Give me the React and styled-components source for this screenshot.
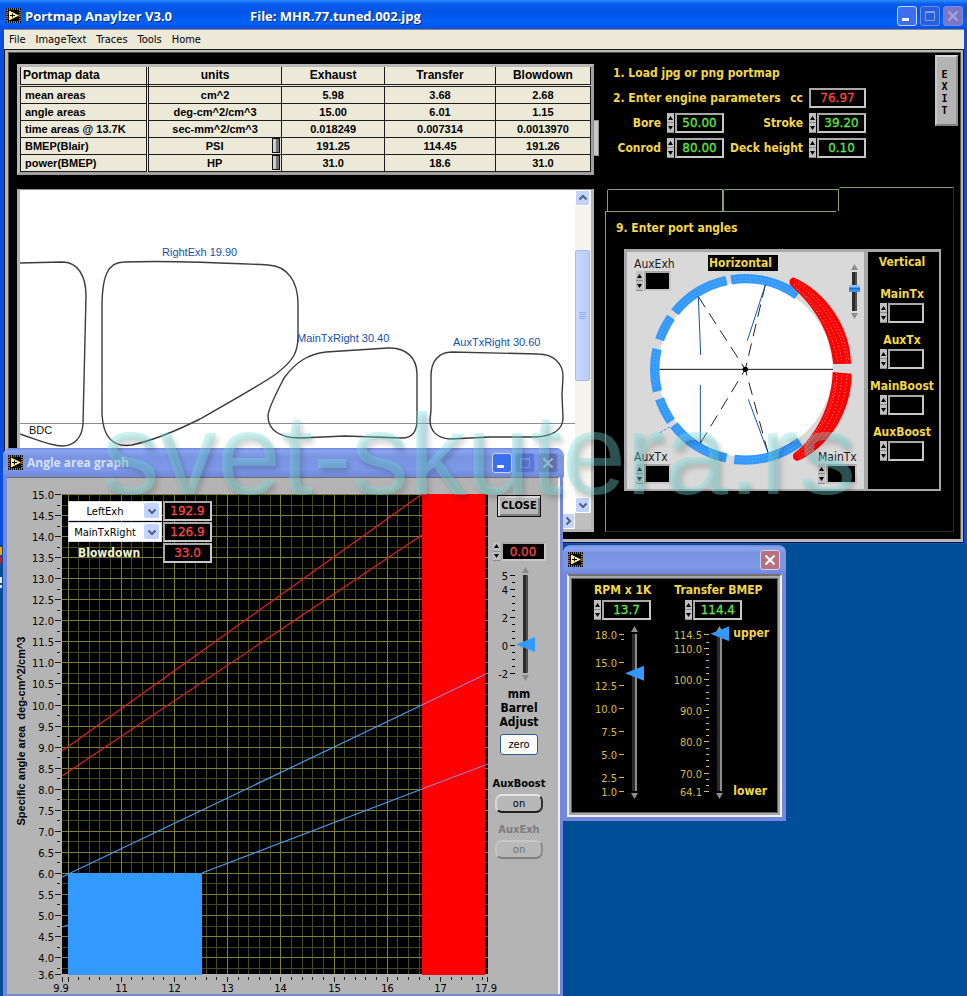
import React, { useState } from 'react';
import styled, { createGlobalStyle, css } from 'styled-components';

const tahoma = `"DejaVu Sans Condensed", "DejaVu Sans", sans-serif`;
const arial = `"Liberation Sans", Arial, sans-serif`;

const GlobalStyle = createGlobalStyle`
  * {
    box-sizing: border-box;
  }
  body {
    margin: 0;
    background: #004e98;
    font-family: ${tahoma};
    font-size: 11px;
    color: #000000;
  }
  button, input, select {
    font: inherit;
    margin: 0;
    padding: 0;
  }
`;

const Desktop = styled.div`
  position: relative;
  min-height: 100vh;
  overflow: hidden;
`;

const DesktopIcon = styled.div`
  position: absolute;
  left: 0;
  top: 547px;
  display: flex;
  flex-direction: column;
  gap: 2px;
  width: 2px;
`;

const IconSliver = styled.span`
  height: ${({ $size }) => $size}px;
  background: ${({ $color }) => $color};
`;

/* windows */

const WindowFrame = styled.section`
  position: absolute;
  border-radius: 8px 8px 0 0;
  background: ${({ $active }) => ($active ? '#0a4ee0' : '#7388dc')};
`;

const MainWindow = styled(WindowFrame)`
  top: 0;
  left: 0;
  right: 0;
  border-radius: 0;
  padding: 0 3px 1px 4px;
`;

const GraphWindow = styled(WindowFrame)`
  top: 448px;
  left: 3px;
  width: 560px;
  padding: 0 3px 2px 4px;
`;

const BmepWindow = styled(WindowFrame)`
  top: 545px;
  left: 563px;
  width: 223px;
  padding: 0 4px 4px;
`;

const TitleBar = styled.header`
  display: flex;
  align-items: center;
  height: ${({ $active }) => ($active ? 29 : 29)}px;
  margin: ${({ $active }) => ($active ? '0 -3px 0 -4px' : '0 -4px')};
  padding: ${({ $active }) => ($active ? '2px 4px 0 6px' : '0 6px 0 5px')};
  border-radius: ${({ $active }) => ($active ? '0' : '8px 8px 0 0')};
  background: ${({ $active }) =>
    $active
      ? 'linear-gradient(#2a8cff 0, #0a5cf0 4px, #0054e3 12px, #0062fa 22px, #0052e8 28px)'
      : 'linear-gradient(#6f86dc 0, #8ba6ee 3px, #7a94e2 8px, #7c98e6 22px, #7286dc 29px)'};
`;

const Title = styled.h1`
  margin: 0 0 0 4px;
  font: bold ${({ $dim }) => ($dim ? 12 : 13)}px/16px "Open Sans", "Noto Sans", sans-serif;
  color: ${({ $dim }) => ($dim ? '#d6e0f8' : '#ffffff')};
  text-shadow: ${({ $dim }) => ($dim ? 'none' : '1px 1px 0 #0a2c80')};
`;

const FileTitle = styled(Title).attrs({ as: 'span' })`
  margin-left: 78px;
`;

const TitleButtons = styled.div`
  display: flex;
  gap: 3px;
  margin-left: auto;
`;

const titleButtonColors = {
  active: ['#3c6ff0', '#ffffff'],
  disabled: ['#2a5fdc', '#7ea0f0'],
  disabledClose: ['#7a78c4', '#a9a4dc'],
  faded: ['#5a78d8', '#7c96e4'],
  fadedClose: ['#6a74bc', '#b9c4e8'],
  close: ['#b8707c', '#ffffff'],
};

const TitleButton = styled.button`
  display: grid;
  place-items: center;
  width: 20px;
  height: 20px;
  border: 1px solid
    ${({ $look }) =>
      $look === 'active' || $look === 'close' ? '#c8d6fa' : '#6f8ce8'};
  border-radius: 3px;
  background: ${({ $look }) => titleButtonColors[$look][0]};
  color: ${({ $look }) => titleButtonColors[$look][1]};
`;

const MenuBar = styled.nav`
  display: flex;
  gap: 10px;
  height: 20px;
  padding: 0 5px;
  border-top: 1px solid #8a8a80;
  background: #ece9d8;
`;

const MenuLink = styled.a`
  font-size: 11px;
  line-height: 20px;
  color: #000000;
  text-decoration: none;
`;

const MainBody = styled.main`
  display: flex;
  gap: 11px;
  padding: 2px 3px 7px 9px;
  border: solid #b8b8b4;
  border-width: 3px 3px 4px 4px;
  background: #000000;
  box-shadow: inset 1px 1px 0 #505050, inset -1px 0 0 #505050;
  outline: 1px solid #181818;
  outline-offset: -1px;
`;

const LeftColumn = styled.div`
  flex: 1;
  min-width: 0;
  display: flex;
  flex-direction: column;
  gap: 14px;
  padding-top: 10px;
`;

const RightColumn = styled.div`
  flex: none;
  width: 353px;
  padding-top: 1px;
`;

/* data table */

const TableFrame = styled.div`
  position: relative;
  border: 3px solid #a8a8a8;
  border-color: #b8b8b8 #a0a0a0 #a0a0a0 #b8b8b8;
`;

const DataTable = styled.table`
  width: 100%;
  table-layout: fixed;
  border-collapse: collapse;
  background: #ece9d8;
  font: bold 11px/14px ${arial};
  text-align: center;
`;

const cell = css`
  height: 17px;
  padding: 1px 4px;
  border: 1px solid #1c1c1c;
  overflow: hidden;
  white-space: nowrap;
`;

const HeadCell = styled.th`
  ${cell}
  height: 18px;
  border-top: 0;
  border-bottom: 3px double #1c1c1c;
  font-size: 12px;
  text-align: ${({ $left }) => ($left ? 'left' : 'center')};
  ${({ $left }) => $left && 'padding-left: 2px; border-right: 3px double #1c1c1c;'}
`;

const RowHead = styled.th`
  ${cell}
  border-right: 3px double #1c1c1c;
  text-align: left;
`;

const Cell = styled.td`
  ${cell}
`;

const UnitCell = styled.div`
  display: flex;
  align-items: center;
  justify-content: flex-end;
  height: 14px;
  margin-right: -3px;
`;

const UnitText = styled.span`
  flex: 1;
  padding-left: 4px;
`;

const UnitButton = styled.button`
  width: 8px;
  height: 15px;
  border: 1px solid #101010;
  background: linear-gradient(90deg, #d0d0d0 40%, #707070 60%);
`;

const TableScroll = styled.div`
  position: absolute;
  top: 53px;
  right: -8px;
  width: 6px;
  height: 36px;
  border: 1px solid #909090;
  background: #c8c8c8;
`;

/* portmap picture */

const MapFrame = styled.div`
  display: grid;
  grid-template-columns: 1fr 16px;
  grid-template-rows: 323px 16px;
  border: 2px solid #b4b4b4;
  border-width: 1px 3px 3px;
  border-top-color: #8c8c8c;
  background: #c0c0c0;
`;

const MapView = styled.div`
  min-width: 0;
  overflow: hidden;
  background: #ffffff;
`;

const Port = styled.path`
  fill: none;
  stroke: #3c3c3c;
  stroke-width: 1.4;
`;

const MapLabel = styled.text`
  font: 11px ${arial};
  fill: ${({ $dark }) => ($dark ? '#101010' : '#1450a8')};
`;

const ScrollBar = styled.div`
  display: flex;
  flex-direction: ${({ $vertical }) => ($vertical ? 'column' : 'row')};
  justify-content: ${({ $vertical }) => ($vertical ? 'flex-start' : 'flex-end')};
  background: #f4f3ee;
`;

const ScrollButton = styled.button`
  display: grid;
  place-items: center;
  flex: none;
  width: 15px;
  height: 16px;
  border: 1px solid #ffffff;
  border-radius: 2px;
  background: #c2d3fc;
  color: #4d6185;
`;

const ScrollThumb = styled.div`
  display: flex;
  flex-direction: column;
  align-items: center;
  justify-content: center;
  gap: 1px;
  width: 15px;
  height: 131px;
  margin: 44px 0 auto;
  border: 1px solid #a4bcf0;
  border-radius: 2px;
  background: linear-gradient(90deg, #cad8fe, #b8ccfb);
`;

const Grip = styled.i`
  width: 7px;
  height: 1px;
  background: #8cb0f8;
`;

/* numeric controls */

const Spin = styled.span`
  display: inline-flex;
  gap: 1px;
`;

const SpinButtons = styled.span`
  display: flex;
  flex-direction: column;
  width: 7px;
`;

const SpinButton = styled.button`
  display: grid;
  place-items: center;
  flex: 1;
  width: 7px;
  border: 1px solid #8c8c8c;
  border-width: 0 0 1px;
  background: #c0c0c0;
`;

const NumberBox = styled.input`
  width: ${({ $width }) => $width || 49}px;
  height: ${({ $height }) => $height || 20}px;
  border: 2px solid #b4b4b4;
  border-color: #a8a8a8 #c8c8c8 #c8c8c8 #a8a8a8;
  border-radius: 0;
  background: #000000;
  color: ${({ $red }) => ($red ? '#f04848' : '#62e44c')};
  font: 12px/16px "DejaVu Sans", sans-serif;
  -webkit-text-stroke: 0.3px currentColor;
  text-align: center;
  outline: none;
`;

/* engine parameters */

const ParamArea = styled.div`
  display: flex;
  justify-content: space-between;
  align-items: flex-start;
  height: 132px;
`;

const ParamGrid = styled.div`
  display: grid;
  grid-template-columns: 56px 57px 73px 57px;
  grid-auto-rows: 20px;
  gap: 5px 6px;
  align-items: center;
  justify-items: end;
  padding-top: 8px;
`;

const Label = styled.label`
  font-weight: bold;
  font-size: 12px;
  line-height: 14px;
  color: ${({ $color }) => $color || '#f2d64c'};
  white-space: nowrap;
`;

const Heading = styled.h2`
  grid-column: 1 / -1;
  justify-self: start;
  margin: 0 0 0 8px;
  font-weight: bold;
  font-size: 12px;
  line-height: 14px;
  color: #f2d64c;
`;

const StepTwo = styled.div`
  grid-column: 1 / 4;
  justify-self: stretch;
  display: flex;
  justify-content: space-between;
`;

const ExitButton = styled.button`
  width: 23px;
  height: 71px;
  padding: 5px 4px 0 0;
  border: 2px solid #b8b8b8;
  border-color: #d8d8d8 #909090 #808080 #c8c8c8;
  background: #b4b4b4;
  font: bold 10px/12px "DejaVu Sans Mono", monospace;
  white-space: pre-line;
`;

/* tab control */

const Tabs = styled.div`
  display: flex;
  align-items: flex-end;
  width: 349px;
  height: 24px;
  padding-left: 2px;
`;

const Tab = styled.button`
  flex: 1;
  height: ${({ $open }) => ($open ? 24 : 22)}px;
  border: 1px solid #86a274;
  border-right-color: ${({ $open }) => ($open ? '#1c3c10' : '#86a274')};
  border-bottom: 0;
  border-left-width: ${({ $open }) => ($open ? 0 : 1)}px;
  border-radius: 2px 0 0 0;
  background: #000000;
`;

const TabPanel = styled.div`
  width: 349px;
  height: 320px;
  padding: 9px 12px 0 18px;
  border: 1px solid #86a274;
  border-color: #86a274 #1c3c10 #1c3c10 #86a274;
  border-top: 0;
`;

const TabRule = styled.div`
  width: 231px;
  height: 1px;
  background: #86a274;
`;

const PanelHeading = styled(Heading)`
  margin: 0 0 14px -8px;
`;

const AngleCluster = styled.div`
  display: grid;
  grid-template-columns: 1fr 71px;
  gap: 4px;
  border: 3px solid #a8a8a8;
  border-width: 3px 3px 2px;
  background: #a8a8a8;
`;

const DialPane = styled.div`
  position: relative;
  height: 237px;
  background: #d9d9d9;
`;

const DialTitle = styled.span`
  position: absolute;
  top: 3px;
  left: 81px;
  padding: 1px 6px 1px 1px;
  background: #000000;
  color: #f2d64c;
  font: bold 12px/14px ${tahoma};
`;

const DialField = styled.label`
  position: absolute;
  display: flex;
  flex-direction: column;
  top: ${({ $bottom }) => ($bottom ? 'auto' : '5px')};
  bottom: ${({ $bottom }) => ($bottom ? '5px' : 'auto')};
  left: ${({ $right }) => ($right ? 'auto' : '7px')};
  right: ${({ $right }) => ($right ? '7px' : 'auto')};
  font: 12px/14px ${tahoma};
  color: #202020;
`;

const DialSpin = styled(Spin)`
  padding-left: ${({ $indent }) => $indent || 0}px;
`;

const DialSlider = styled.div`
  position: absolute;
  top: 12px;
  right: 4px;
`;

const VerticalPane = styled.div`
  display: flex;
  flex-direction: column;
  align-items: center;
  padding: 3px 3px 3px 0;
  background: #000000;
`;

const VerticalTitle = styled(Label).attrs({ as: 'h3' })`
  margin: 0 0 8px;
`;

const VerticalField = styled.label`
  display: flex;
  flex-direction: column;
  align-items: center;
  gap: 2px;
  padding-top: 10px;
  font: bold 12px/14px ${tahoma};
  color: #f2d64c;
`;

/* sliders */

const SliderRow = styled.div`
  display: flex;
  align-items: center;
`;

const SliderColumn = styled.div`
  display: flex;
  flex-direction: column;
  align-items: center;
  gap: 1px;
`;

const Track = styled.div`
  width: ${({ $bar }) => ($bar ? 11 : 19)}px;
  height: ${({ $height }) => $height}px;
  background: linear-gradient(90deg, #2c2c2c 60%, ${({ $edge }) => $edge || '#505050'} 61%)
    center / 5px 100% no-repeat;
`;

const Range = styled.input`
  appearance: none;
  display: block;
  writing-mode: vertical-lr;
  direction: rtl;
  width: 100%;
  height: ${({ $bar }) => ($bar ? '100%' : 'calc(100% + 15px)')};
  margin-top: ${({ $bar }) => ($bar ? 0 : -8)}px;
  background: transparent;
  &::-webkit-slider-thumb {
    appearance: none;
    width: ${({ $bar }) => ($bar ? 11 : 19)}px;
    height: ${({ $bar }) => ($bar ? 7 : 15)}px;
    border: 0;
    background: ${({ $bar }) =>
      $bar ? 'linear-gradient(#8cc4ff 0 2px, #2070c8 3px 4px, #3399ff 5px)' : '#3399ff'};
    clip-path: ${({ $bar }) => ($bar ? 'none' : 'polygon(0 50%, 100% 0, 100% 100%)')};
  }
`;

const ScaleText = styled.text`
  font: 11px ${tahoma};
  fill: ${({ $color }) => $color};
  text-anchor: end;
`;

/* graph window */

const GraphBody = styled.div`
  display: flex;
  border-top: 1px solid #707070;
  border-right: 2px solid #f0f0f0;
  background: #b4b4b4;
`;

const ChartArea = styled.div`
  position: relative;
  flex: none;
  width: 483px;
`;

const ChartSvg = styled.svg`
  display: block;
  overflow: visible;
`;

const AxisText = styled.text`
  font: 11px ${tahoma};
  text-anchor: ${({ $anchor }) => $anchor || 'end'};
`;

const AxisTitle = styled.text`
  font: bold 11px ${arial};
  text-anchor: middle;
  white-space: pre;
`;

const ChartControls = styled.div`
  position: absolute;
  top: 23px;
  left: 61px;
  display: grid;
  grid-template-columns: 94px 49px;
  gap: 1px;
`;

const SelectWrap = styled.div`
  position: relative;
  height: 20px;
`;

const Select = styled.select`
  appearance: none;
  width: 100%;
  height: 20px;
  padding: 0 20px 0 0;
  border: 1px solid #d8dce8;
  border-radius: 0;
  background: #ffffff;
  text-align: center;
  text-align-last: center;
`;

const SelectArrow = styled.span`
  position: absolute;
  top: 2px;
  right: 3px;
  display: grid;
  place-items: center;
  width: 15px;
  height: 15px;
  border-radius: 2px;
  background: #c2d3fc;
  color: #4d6185;
  pointer-events: none;
`;

const BlowdownLabel = styled(Label)`
  padding-left: 10px;
  line-height: 20px;
`;

const GraphSide = styled.div`
  display: flex;
  flex-direction: column;
  align-items: center;
  width: 58px;
  padding-top: 17px;
`;

const CloseButton = styled.button`
  width: 44px;
  height: 22px;
  margin-bottom: 25px;
  border: 1px solid #101010;
  background: #b8b8b8;
  box-shadow: inset 1px 1px 0 1px #d8d8d8, inset -1px -1px 0 1px #808080;
  font: bold 11px/18px ${tahoma};
`;

const BarrelSlider = styled(SliderRow)`
  align-self: flex-start;
  margin-top: 4px;
`;

const BarrelText = styled.p`
  margin: 4px 0 5px;
  font-weight: bold;
  font-size: 12px;
  line-height: 14px;
  text-align: center;
`;

const ZeroButton = styled.button`
  width: 38px;
  height: 21px;
  margin-bottom: 22px;
  border: 1px solid #2c5c8c;
  border-radius: 3px;
  background: #fafaf6;
`;

const SideLabel = styled(Label)`
  font-size: 11px;
`;

const OnButton = styled.button`
  width: 48px;
  height: 19px;
  margin: 3px 0 10px;
  border: 2px solid;
  border-color: ${({ disabled }) =>
    disabled ? '#c8c8c8 #8c8c8c #808080 #c4c4c4' : '#e4e4e4 #303030 #202020 #d8d8d8'};
  border-radius: 7px;
  background: #b8b8b8;
  color: ${({ disabled }) => (disabled ? '#707070' : '#000000')};
  line-height: 14px;
`;

/* bmep window */

const BmepBody = styled.div`
  display: flex;
  gap: 23px;
  height: 243px;
  padding: 7px 0 0 25px;
  border: 2px solid #f0f0ec;
  border-top-color: #707070;
  background: #000000;
  box-shadow: inset 0 0 0 2px #a8a8a8, inset 0 0 0 3px #606060;
`;

const BmepColumn = styled.div`
  display: flex;
  flex-direction: column;
  align-items: flex-start;
`;

const BmepSpin = styled(Spin)`
  margin: 3px 0 4px ${({ $indent }) => $indent || 0}px;
`;

const Bounds = styled.div`
  display: flex;
  flex-direction: column;
  justify-content: space-between;
  align-self: stretch;
  padding: 2px 0 3px 4px;
`;

const Watermark = styled.div`
  position: absolute;
  top: 389px;
  left: 102px;
  font: 115px/130px ${arial};
  color: rgba(120, 225, 225, 0.36);
  text-shadow: 3px 4px 5px rgba(0, 0, 0, 0.16);
  white-space: nowrap;
  pointer-events: none;
`;

const AppIcon = () => (
  <svg width="15" height="15" viewBox="0 0 15 15">
    <rect width="15" height="15" fill="#101010" />
    <rect x="1" y="1" width="13" height="13" fill="none" stroke="#e8e0a0" strokeDasharray="1 1" />
    <rect x="2" y="2" width="11" height="11" fill="#000000" />
    <path d="M0 5h3M0 10h3M12 8h3" stroke="#d03020" />
    <path d="M3 2.500l10 5-10 5z" fill="#fff68c" />
    <path d="M4 7.500h5M6.500 5.500v4" stroke="#000000" />
  </svg>
);

const MinimizeGlyph = () => (
  <svg width="16" height="16">
    <path d="M3 11.500h7" stroke="currentColor" strokeWidth="3" />
  </svg>
);

const MaximizeGlyph = () => (
  <svg width="16" height="16">
    <path d="M3.500 3.500h9v9h-9zM3.500 4.500h9" fill="none" stroke="currentColor" />
  </svg>
);

const CloseGlyph = () => (
  <svg width="16" height="16">
    <path d="M3.500 3.500l9 9M12.500 3.500l-9 9" stroke="currentColor" strokeWidth="2" />
  </svg>
);

const Chevron = ({ turn = 0 }) => (
  <svg width="10" height="10" viewBox="0 0 10 10">
    <path
      d="M1.500 3.500L5 7l3.500-3.500"
      fill="none"
      stroke="currentColor"
      strokeWidth="2"
      transform={`rotate(${turn} 5 5)`}
    />
  </svg>
);

const SpinArrow = ({ down }) => (
  <svg width="5" height="4">
    <path d={down ? 'M0 0h5L2.500 4z' : 'M0 4h5L2.500 0z'} />
  </svg>
);

const EndArrow = ({ down }) => (
  <svg width="7" height="7">
    <path d={down ? 'M0 1h7L3.500 7z' : 'M0 6h7L3.500 0z'} fill="#8c8c8c" />
  </svg>
);

const NumberSpin = ({ as: Wrap = Spin, indent, label, ...box }) => (
  <Wrap $indent={indent}>
    <SpinButtons>
      <SpinButton aria-label="Increase">
        <SpinArrow />
      </SpinButton>
      <SpinButton aria-label="Decrease">
        <SpinArrow down />
      </SpinButton>
    </SpinButtons>
    <NumberBox aria-label={label} {...box} />
  </Wrap>
);

const Slider = ({ bar, height, edge, label, ...range }) => (
  <SliderColumn>
    <EndArrow />
    <Track $bar={bar} $height={height} $edge={edge}>
      <Range type="range" step="any" aria-label={label} $bar={bar} {...range} />
    </Track>
    <EndArrow down />
  </SliderColumn>
);

const Scale = ({ width, height, min, max, labels, minors = [], digits = 0, color = '#000000' }) => {
  const at = (v) => Math.round(10 + ((max - v) / (max - min)) * height) + 0.5;
  return (
    <svg width={width} height={height + 20}>
      {labels.map((v) => (
        <g key={v}>
          <ScaleText $color={color} x={width - 8} y={at(v) + 4}>
            {v.toFixed(digits)}
          </ScaleText>
          <path d={`M${width - 6} ${at(v)}h5`} stroke={color} />
        </g>
      ))}
      {minors.map((v) => (
        <path key={v} d={`M${width - 4} ${at(v)}h3`} stroke={color} />
      ))}
    </svg>
  );
};

const rows = [
  ['mean areas', 'cm^2', '5.98', '3.68', '2.68'],
  ['angle areas', 'deg-cm^2/cm^3', '15.00', '6.01', '1.15'],
  ['time areas @ 13.7K', 'sec-mm^2/cm^3', '0.018249', '0.007314', '0.0013970'],
  ['BMEP(Blair)', 'PSI', '191.25', '114.45', '191.26'],
  ['power(BMEP)', 'HP', '31.0', '18.6', '31.0'],
];

const PortData = () => (
  <TableFrame>
    <DataTable>
      <colgroup>
        <col style={{ width: '22.3%' }} />
        <col style={{ width: '23.5%' }} />
        <col style={{ width: '18.1%' }} />
        <col style={{ width: '19.4%' }} />
        <col />
      </colgroup>
      <thead>
        <tr>
          <HeadCell $left>Portmap data</HeadCell>
          <HeadCell>units</HeadCell>
          <HeadCell>Exhaust</HeadCell>
          <HeadCell>Transfer</HeadCell>
          <HeadCell>Blowdown</HeadCell>
        </tr>
      </thead>
      <tbody>
        {rows.map(([name, unit, ...values]) => (
          <tr key={name}>
            <RowHead scope="row">{name}</RowHead>
            <Cell>
              {unit === 'PSI' || unit === 'HP' ? (
                <UnitCell>
                  <UnitText>{unit}</UnitText>
                  <UnitButton aria-label={`Change ${unit}`} />
                </UnitCell>
              ) : (
                unit
              )}
            </Cell>
            {values.map((value, i) => (
              <Cell key={i}>{value}</Cell>
            ))}
          </tr>
        ))}
      </tbody>
    </DataTable>
    <TableScroll />
  </TableFrame>
);

const PortMap = () => (
  <MapFrame>
    <MapView>
      <svg width="555" height="323" viewBox="20 190 555 323">
        <path d="M20 423.500h555" stroke="#8c8c8c" />
        <Port d="M20 263L62 262C78 262 86 276 86 296L83 424C82 438 74 446 62 446C50 446 38 440 20 434" />
        <Port d="M124 262C150 261 190 261 268 265C288 266 298 282 298 304V336C298 352 294 360 276 374C262 384 230 402 200 419C170 434 150 441 132 445C112 448 103 436 102 414V306C102 276 108 262 124 262Z" />
        <Port d="M326 352L388 348C406 347 417 358 417 374V420C417 432 412 438 402 438L345 436L300 438C280 438 268 430 268 416C268 408 280 386 284 378C296 362 308 354 326 352Z" />
        <Port d="M452 352L538 354C554 354 563 364 563 376L562 395L563 418C563 430 552 436 536 437L490 437L450 439C436 438 430 430 430 420L431 410V376C431 362 438 352 452 352Z" />
        <MapLabel x="162" y="256">RightExh 19.90</MapLabel>
        <MapLabel x="297" y="342">MainTxRight 30.40</MapLabel>
        <MapLabel x="453" y="346">AuxTxRight 30.60</MapLabel>
        <MapLabel x="29" y="434" $dark>BDC</MapLabel>
      </svg>
    </MapView>
    <ScrollBar $vertical>
      <ScrollButton aria-label="Scroll up">
        <Chevron turn={180} />
      </ScrollButton>
      <ScrollThumb>
        <Grip />
        <Grip />
        <Grip />
        <Grip />
      </ScrollThumb>
      <ScrollButton aria-label="Scroll down">
        <Chevron />
      </ScrollButton>
    </ScrollBar>
    <ScrollBar>
      <ScrollButton aria-label="Scroll right">
        <Chevron turn={-90} />
      </ScrollButton>
    </ScrollBar>
  </MapFrame>
);

const arc = (from, to, r) => {
  const point = (deg) => {
    const a = (deg * Math.PI) / 180;
    return `${(346 + r * Math.cos(a)).toFixed(1)} ${(358 - r * Math.sin(a)).toFixed(1)}`;
  };
  return `M${point(from)}A${r} ${r} 0 0 0 ${point(to)}`;
};

const blueArcs = [
  [55, 99],
  [102, 141],
  [145, 161],
  [167, 194],
  [199, 215],
  [218, 258],
  [263, 307],
];

const Dial = () => (
  <svg width="237" height="237" viewBox="-9 6 711 711">
    <circle cx="346" cy="358" r="262" fill="#ffffff" />
    {blueArcs.map(([from, to]) => (
      <g key={from} fill="none">
        <path d={arc(from, to, 272)} stroke="#3399ff" strokeWidth="28" />
        <path d={arc(from + 2, to - 2, 266)} stroke="#a8d4ff" strokeWidth="2" strokeDasharray="3 6" />
        <path d={arc(from + 2, to - 2, 276)} stroke="#a8d4ff" strokeWidth="2" strokeDasharray="3 8" />
      </g>
    ))}
    <path d="M90 548l30-18" stroke="#3399ff" strokeWidth="3" strokeDasharray="8 5" />
    <path d="M490 82C590 125 662 235 663 341L610 342C600 250 560 175 480 104Q474 88 490 82Z" fill="#ff0000" />
    <path d="M608 366L665 371C665 480 600 592 502 633Q484 628 490 612C560 560 606 460 608 366Z" fill="#ff0000" />
    <g fill="none" stroke="#ffc4c4" strokeWidth="2" strokeDasharray="4 6">
      <path d="M496 96C580 160 636 240 650 336" />
      <path d="M492 104C575 175 626 250 636 336" />
      <path d="M500 116C570 180 612 260 623 336" />
      <path d="M506 96C588 155 642 235 656 330" />
      <path d="M621 376C618 470 570 560 500 612" />
      <path d="M636 376C630 480 580 570 504 620" />
      <path d="M651 376C645 485 590 580 508 624" />
      <path d="M614 400C608 470 565 555 500 604" />
    </g>
    <path d="M88 358h521" stroke="#101010" strokeWidth="3" />
    <g stroke="#202020" strokeWidth="3" strokeDasharray="38 22">
      <path d="M205 140L346 358" />
      <path d="M406 105L346 358" />
      <path d="M211 580L346 358" />
      <path d="M414 608L346 358" />
    </g>
    <path d="M205 140l7 175M406 105l-54 167M211 405v173M355 448l59 160" stroke="#1c54a0" strokeWidth="3" />
    <circle cx="346" cy="358" r="8" />
  </svg>
);

const PortAngles = () => (
  <AngleCluster>
    <DialPane>
      <Dial />
      <DialTitle>Horizontal</DialTitle>
      <DialField>
        AuxExh
        <NumberSpin as={DialSpin} indent={2} $width={27} />
      </DialField>
      <DialField $bottom>
        AuxTx
        <NumberSpin as={DialSpin} indent={2} $width={27} />
      </DialField>
      <DialField $bottom $right>
        MainTx
        <NumberSpin as={DialSpin} $width={31} />
      </DialField>
      <DialSlider>
        <Slider bar height={39} min={0} max={10} defaultValue={6} label="Rotate" />
      </DialSlider>
    </DialPane>
    <VerticalPane>
      <VerticalTitle>Vertical</VerticalTitle>
      {['MainTx', 'AuxTx', 'MainBoost', 'AuxBoost'].map((name) => (
        <VerticalField key={name}>
          {name}
          <NumberSpin $width={36} />
        </VerticalField>
      ))}
    </VerticalPane>
  </AngleCluster>
);

const xAt = (v) => Math.round(67.5 + (v - 10) * 53.2) + 0.5;
const yAt = (v) => Math.round(494 + (15 - v) * 42.1) + 0.5;
const steps = (from, to, step) =>
  Array.from({ length: Math.round((to - from) / step) + 1 }, (_, i) => from + i * step);

const AreaChart = () => (
  <ChartSvg width="483" height="516" viewBox="7 478 483 516">
    <rect x="62" y="494" width="426" height="480" />
    <g stroke="#44481c">
      {steps(10, 17.8, 0.2).map((v) => (
        <path key={v} d={`M${xAt(v)} 494V974`} />
      ))}
      {steps(3.75, 14.75, 0.5).map((v) => (
        <path key={v} d={`M62 ${yAt(v)}H488`} />
      ))}
    </g>
    <g stroke="#7d8238">
      {steps(10, 17, 1).map((v) => (
        <path key={v} d={`M${xAt(v)} 494V974`} />
      ))}
      {steps(4, 15, 0.5).map((v) => (
        <path key={v} d={`M62 ${yAt(v)}H488`} />
      ))}
    </g>
    <rect x="68" y="873" width="134" height="102" fill="#3399ff" />
    <rect x="422" y="494" width="63" height="481" fill="#ff0000" />
    <g fill="none" strokeWidth="1.200">
      <path d="M62 751L422 494M62 776L422 535" stroke="#e02020" />
      <path d="M62 877L422 705M202 873L422 789M62 927l6-2" stroke="#4c9cec" />
      <path d="M422 705L488 673M422 789L488 764" stroke="#a878c0" />
    </g>
    <g stroke="#202020">
      {steps(4, 15, 0.5).map((v) => (
        <path key={v} d={`M55 ${yAt(v)}h6`} />
      ))}
      {steps(3.75, 14.75, 0.5).map((v) => (
        <path key={v} d={`M57 ${yAt(v)}h3`} />
      ))}
      {steps(10, 17.8, 0.2).map((v) => (
        <path key={v} d={`M${xAt(v)} 977v3`} />
      ))}
      {steps(10, 17, 1).map((v) => (
        <path key={v} d={`M${xAt(v)} 977v5`} />
      ))}
      <path d="M55 974.500h6M62.500 977v5M487.500 977v5" />
    </g>
    {[...steps(4, 15, 0.5), 3.6].map((v) => (
      <AxisText key={v} x="54" y={yAt(v) + 4}>
        {v.toFixed(1)}
      </AxisText>
    ))}
    {[9.9, 11, 12, 13, 14, 15, 16, 17, 17.9].map((v) => (
      <AxisText key={v} $anchor="middle" x={v === 17.9 ? 486 : v === 9.9 ? 61 : xAt(v)} y="992">
        {v}
      </AxisText>
    ))}
    <AxisTitle transform="translate(25 731) rotate(-90)">
      {'Specific angle area  deg-cm^2/cm^3'}
    </AxisTitle>
  </ChartSvg>
);

const ports = ['LeftExh', 'RightExh', 'MainTxRight', 'AuxTxRight'];

const PortSelect = ({ initial, label }) => {
  const [port, setPort] = useState(initial);
  return (
    <SelectWrap>
      <Select aria-label={label} value={port} onChange={(e) => setPort(e.target.value)}>
        {ports.map((name) => (
          <option key={name}>{name}</option>
        ))}
      </Select>
      <SelectArrow>
        <Chevron />
      </SelectArrow>
    </SelectWrap>
  );
};

const App = () => {
  return (
    <Desktop>
      <GlobalStyle />
      <DesktopIcon>
        <IconSliver $size={8} $color="#f0a020" />
        <IconSliver $size={6} $color="#c81c28" />
        <IconSliver $size={10} $color="#004e98" />
        <IconSliver $size={6} $color="#e8e8f0" />
        <IconSliver $size={3} $color="#e8e8f0" />
      </DesktopIcon>

      <MainWindow $active>
        <TitleBar $active>
          <AppIcon />
          <Title>Portmap Anaylzer V3.0</Title>
          <FileTitle>File: MHR.77.tuned.002.jpg</FileTitle>
          <TitleButtons>
            <TitleButton $look="active" aria-label="Minimize">
              <MinimizeGlyph />
            </TitleButton>
            <TitleButton $look="disabled" aria-label="Maximize">
              <MaximizeGlyph />
            </TitleButton>
            <TitleButton $look="disabledClose" aria-label="Close">
              <CloseGlyph />
            </TitleButton>
          </TitleButtons>
        </TitleBar>
        <MenuBar>
          {['File', 'ImageText', 'Traces', 'Tools', 'Home'].map((name) => (
            <MenuLink key={name} href="#">
              {name}
            </MenuLink>
          ))}
        </MenuBar>
        <MainBody>
          <LeftColumn>
            <PortData />
            <PortMap />
          </LeftColumn>
          <RightColumn>
            <ParamArea>
              <ParamGrid>
                <Heading>1. Load jpg or png portmap</Heading>
                <StepTwo>
                  <Heading>2. Enter engine parameters</Heading>
                  <Label htmlFor="cc">cc</Label>
                </StepTwo>
                <NumberBox id="cc" $red $width={57} defaultValue="76.97" />
                <Label htmlFor="bore">Bore</Label>
                <NumberSpin id="bore" defaultValue="50.00" />
                <Label htmlFor="stroke">Stroke</Label>
                <NumberSpin id="stroke" defaultValue="39.20" />
                <Label htmlFor="conrod">Conrod</Label>
                <NumberSpin id="conrod" defaultValue="80.00" />
                <Label htmlFor="deck">Deck height</Label>
                <NumberSpin id="deck" defaultValue="0.10" />
              </ParamGrid>
              <ExitButton>{'E\nX\nI\nT'}</ExitButton>
            </ParamArea>
            <Tabs>
              <Tab aria-label="Page 1" />
              <Tab aria-label="Page 2" />
              <Tab aria-label="Page 3" $open />
            </Tabs>
            <TabRule />
            <TabPanel>
              <PanelHeading>9. Enter port angles</PanelHeading>
              <PortAngles />
            </TabPanel>
          </RightColumn>
        </MainBody>
      </MainWindow>

      <GraphWindow>
        <TitleBar>
          <AppIcon />
          <Title $dim>Angle area graph</Title>
          <TitleButtons>
            <TitleButton $look="active" aria-label="Minimize">
              <MinimizeGlyph />
            </TitleButton>
            <TitleButton $look="faded" aria-label="Maximize">
              <MaximizeGlyph />
            </TitleButton>
            <TitleButton $look="fadedClose" aria-label="Close">
              <CloseGlyph />
            </TitleButton>
          </TitleButtons>
        </TitleBar>
        <GraphBody>
          <ChartArea>
            <AreaChart />
            <ChartControls>
              <PortSelect initial="LeftExh" label="Exhaust port" />
              <NumberBox readOnly $red aria-label="Exhaust" value="192.9" />
              <PortSelect initial="MainTxRight" label="Transfer port" />
              <NumberBox readOnly $red aria-label="Transfer" value="126.9" />
              <BlowdownLabel htmlFor="blowdown" $color="#f0f0d0">
                Blowdown
              </BlowdownLabel>
              <NumberBox readOnly $red id="blowdown" value="33.0" />
            </ChartControls>
          </ChartArea>
          <GraphSide>
            <CloseButton>CLOSE</CloseButton>
            <NumberSpin label="Barrel adjust" $red $width={45} $height={19} defaultValue="0.00" />
            <BarrelSlider>
              <Scale
                width={26}
                height={98}
                min={-2}
                max={5}
                labels={[5, 4, 2, 0, -2]}
                minors={[4.5, 3.5, 3, 2.5, 1.5, 1, 0.5, -0.5, -1, -1.5]}
              />
              <Slider height={98} min={-2} max={5} defaultValue={0} label="Barrel" />
            </BarrelSlider>
            <BarrelText>
              mm
              <br />
              Barrel
              <br />
              Adjust
            </BarrelText>
            <ZeroButton>zero</ZeroButton>
            <SideLabel $color="#000000" htmlFor="auxboost">
              AuxBoost
            </SideLabel>
            <OnButton id="auxboost">on</OnButton>
            <SideLabel $color="#7c7c7c" htmlFor="auxexh">
              AuxExh
            </SideLabel>
            <OnButton id="auxexh" disabled>
              on
            </OnButton>
          </GraphSide>
        </GraphBody>
      </GraphWindow>

      <BmepWindow>
        <TitleBar>
          <AppIcon />
          <TitleButtons>
            <TitleButton $look="close" aria-label="Close">
              <CloseGlyph />
            </TitleButton>
          </TitleButtons>
        </TitleBar>
        <BmepBody>
          <BmepColumn>
            <Label htmlFor="rpm">RPM x 1K</Label>
            <NumberSpin as={BmepSpin} id="rpm" defaultValue="13.7" />
            <SliderRow>
              <Scale
                width={31}
                height={157}
                min={1}
                max={18}
                digits={1}
                color="#d8bc48"
                labels={[18, 15, 12.5, 10, 7.5, 5, 2.5, 1]}
                minors={[17.5]}
              />
              <Slider height={157} edge="#8c8c8c" min={1} max={18} defaultValue={13.7} label="RPM" />
            </SliderRow>
          </BmepColumn>
          <BmepColumn>
            <Label htmlFor="bmep">Transfer BMEP</Label>
            <NumberSpin as={BmepSpin} indent={11} id="bmep" defaultValue="114.4" />
            <SliderRow>
              <Scale
                width={36}
                height={157}
                min={64.1}
                max={114.5}
                digits={1}
                color="#d8bc48"
                labels={[114.5, 110, 100, 90, 80, 70, 64.1]}
                minors={[66, 68, 72, 74, 76, 78, 82, 84, 86, 88, 92, 94, 96, 98, 102, 104, 106, 108, 112]}
              />
              <Slider
                height={157}
                edge="#8c8c8c"
                min={64.1}
                max={114.5}
                defaultValue={114.4}
                label="BMEP"
              />
              <Bounds>
                <Label as="span">upper</Label>
                <Label as="span">lower</Label>
              </Bounds>
            </SliderRow>
          </BmepColumn>
        </BmepBody>
      </BmepWindow>

      <Watermark>svet-skutera.rs</Watermark>
    </Desktop>
  );
};

export default App;
